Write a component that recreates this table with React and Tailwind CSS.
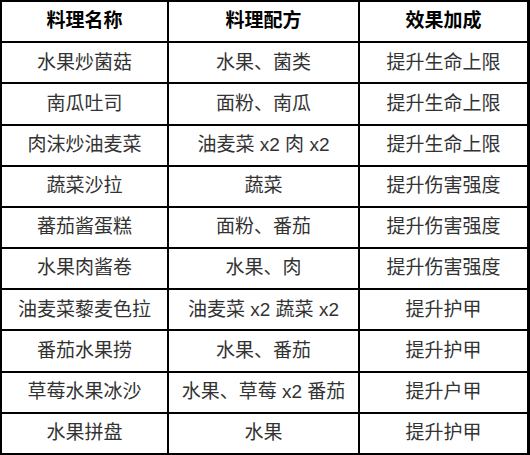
import React from "react";

const rows = [
  ["水果炒菌菇", "水果、菌类", "提升生命上限"],
  ["南瓜吐司", "面粉、南瓜", "提升生命上限"],
  ["肉沫炒油麦菜", "油麦菜 x2 肉 x2", "提升生命上限"],
  ["蔬菜沙拉", "蔬菜", "提升伤害强度"],
  ["蕃茄酱蛋糕", "面粉、番茄", "提升伤害强度"],
  ["水果肉酱卷", "水果、肉", "提升伤害强度"],
  ["油麦菜藜麦色拉", "油麦菜 x2 蔬菜 x2", "提升护甲"],
  ["番茄水果捞", "水果、番茄", "提升护甲"],
  ["草莓水果冰沙", "水果、草莓 x2 番茄", "提升户甲"],
  ["水果拼盘", "水果", "提升护甲"],
];

export default function App() {
  return (
    <div
      className="w-[530px] h-[455px] bg-black pt-[2px] pb-[2px] pl-[2px] pr-[3px] grid grid-cols-[165px_189px_167px] grid-rows-[repeat(11,1fr)] gap-[2px]"
      style={{ fontFamily: '"Liberation Sans", "Noto Sans CJK SC", sans-serif' }}
    >
      {["料理名称", "料理配方", "效果加成"].map((h) => (
        <div key={h} className="bg-white flex items-center justify-center text-[19px] font-bold text-black">
          {h}
        </div>
      ))}
      {rows.map((r, i) =>
        r.map((c, j) => (
          <div key={i + "-" + j} className="bg-white flex items-center justify-center text-[19px] text-[#333]">
            {c}
          </div>
        ))
      )}
    </div>
  );
}
